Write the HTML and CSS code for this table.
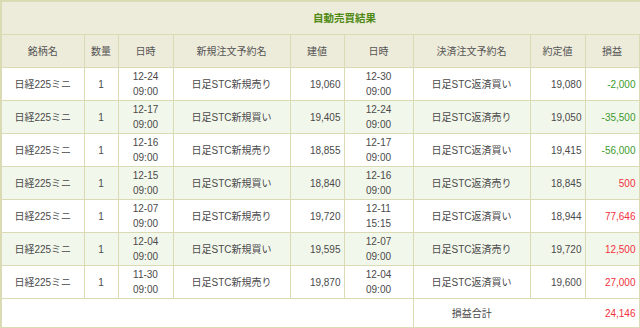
FILE: index.html
```html
<!DOCTYPE html>
<html lang="ja">
<head>
<meta charset="utf-8">
<title>自動売買結果</title>
<link rel="stylesheet" href="styles.css">
</head>
<body>
<table class="result">
  <colgroup>
    <col class="c-name"><col class="c-qty"><col class="c-date"><col class="c-order"><col class="c-price">
    <col class="c-date2"><col class="c-order"><col class="c-fill"><col class="c-pl"><col class="c-extra">
  </colgroup>
  <thead>
    <tr class="title-row"><th colspan="10" class="title">自動売買結果</th></tr>
    <tr class="head-row">
      <th>銘柄名</th><th>数量</th><th>日時</th><th>新規注文予約名</th><th>建値</th>
      <th>日時</th><th>決済注文予約名</th><th>約定値</th><th>損益</th><th></th>
    </tr>
  </thead>
  <tbody>
    <tr>
      <td>日経225ミニ</td><td>1</td><td>12-24<br>09:00</td><td>日足STC新規売り</td><td class="num">19,060</td>
      <td>12-30<br>09:00</td><td>日足STC返済買い</td><td class="num">19,080</td><td class="num loss">-2,000</td><td></td>
    </tr>
    <tr class="alt">
      <td>日経225ミニ</td><td>1</td><td>12-17<br>09:00</td><td>日足STC新規買い</td><td class="num">19,405</td>
      <td>12-24<br>09:00</td><td>日足STC返済売り</td><td class="num">19,050</td><td class="num loss">-35,500</td><td></td>
    </tr>
    <tr>
      <td>日経225ミニ</td><td>1</td><td>12-16<br>09:00</td><td>日足STC新規売り</td><td class="num">18,855</td>
      <td>12-17<br>09:00</td><td>日足STC返済買い</td><td class="num">19,415</td><td class="num loss">-56,000</td><td></td>
    </tr>
    <tr class="alt">
      <td>日経225ミニ</td><td>1</td><td>12-15<br>09:00</td><td>日足STC新規買い</td><td class="num">18,840</td>
      <td>12-16<br>09:00</td><td>日足STC返済売り</td><td class="num">18,845</td><td class="num gain">500</td><td></td>
    </tr>
    <tr>
      <td>日経225ミニ</td><td>1</td><td>12-07<br>09:00</td><td>日足STC新規売り</td><td class="num">19,720</td>
      <td>12-11<br>15:15</td><td>日足STC返済買い</td><td class="num">18,944</td><td class="num gain">77,646</td><td></td>
    </tr>
    <tr class="alt">
      <td>日経225ミニ</td><td>1</td><td>12-04<br>09:00</td><td>日足STC新規買い</td><td class="num">19,595</td>
      <td>12-07<br>09:00</td><td>日足STC返済売り</td><td class="num">19,720</td><td class="num gain">12,500</td><td></td>
    </tr>
    <tr>
      <td>日経225ミニ</td><td>1</td><td>11-30<br>09:00</td><td>日足STC新規売り</td><td class="num">19,870</td>
      <td>12-04<br>09:00</td><td>日足STC返済買い</td><td class="num">19,600</td><td class="num gain">27,000</td><td></td>
    </tr>
    <tr class="total-row">
      <td colspan="6"></td>
      <td class="total-label">損益合計</td>
      <td class="total-gap"></td>
      <td class="num gain total-value">24,146</td>
      <td></td>
    </tr>
  </tbody>
</table>
</body>
</html>
```
FILE: styles.css
```css
html, body {
  margin: 0;
  padding: 0;
  overflow: hidden;
  background: #ffffff;
}

body {
  font-family: "Liberation Sans", "Noto Sans CJK JP", sans-serif;
  font-size: 10px;
  color: #4a4a4a;
}

.result {
  border-collapse: collapse;
  table-layout: fixed;
  width: 687px;
  border: 2px solid #dadab4;
}

.c-name { width: 83px; }
.c-qty { width: 34px; }
.c-date { width: 55px; }
.c-order { width: 117px; }
.c-price { width: 54px; }
.c-date2 { width: 69px; }
.c-fill { width: 55px; }
.c-pl { width: 54px; }
.c-extra { width: 49px; }

.result th,
.result td {
  border: 1px solid #dadab4;
  height: 32px;
  padding: 0 3px;
  line-height: 15px;
  text-align: center;
  vertical-align: middle;
  font-weight: normal;
  white-space: nowrap;
}

.title-row th,
.head-row th {
  background: #edebda;
}

.result th.title {
  color: #4f8a14;
  font-weight: bold;
  font-size: 10.5px;
}

.head-row th {
  color: #555555;
}

.result tr.alt td {
  background: #f2f7ec;
}

.result td.num {
  text-align: right;
}

.result td.loss {
  color: #3c9a2c;
}

.result td.gain {
  color: #f2303c;
}

.total-row td {
  height: 28px;
}

.result td.total-label {
  border-right-style: hidden;
}

.result td.total-gap {
  border-left-style: hidden;
  border-right-style: hidden;
}

.result td.total-value {
  border-left-style: hidden;
}
```
